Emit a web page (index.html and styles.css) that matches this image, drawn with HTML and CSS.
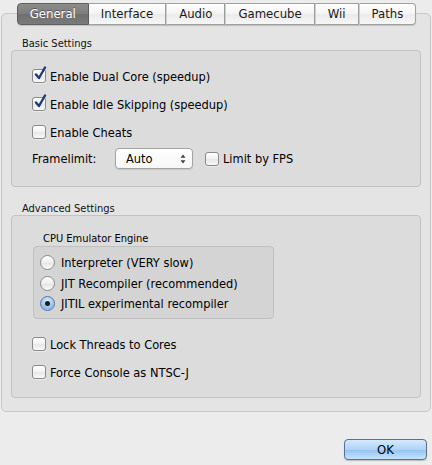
FILE: index.html
```html
<!DOCTYPE html>
<html>
<head>
<meta charset="utf-8">
<link rel="stylesheet" href="styles.css">
</head>
<body>
<div class="window">
  <div class="tabs">
    <div class="tab selected">General</div>
    <div class="tab">Interface</div>
    <div class="tab">Audio</div>
    <div class="tab">Gamecube</div>
    <div class="tab">Wii</div>
    <div class="tab">Paths</div>
  </div>
  <div class="pane">
    <div class="group-title">Basic Settings</div>
    <div class="group basic">
      <label class="row check-row"><span class="cb checked"><svg viewBox="0 0 14 16" class="tick"><path d="M3 8.5 L6 12 L12 1.5" /></svg></span>Enable Dual Core (speedup)</label>
      <label class="row check-row"><span class="cb checked"><svg viewBox="0 0 14 16" class="tick"><path d="M3 8.5 L6 12 L12 1.5" /></svg></span>Enable Idle Skipping (speedup)</label>
      <label class="row check-row"><span class="cb"></span>Enable Cheats</label>
      <div class="row frame-row">
        <span class="frame-label">Framelimit:</span>
        <span class="combo"><span class="combo-text">Auto</span><svg class="arrows" viewBox="0 0 6 10"><path d="M3 0.5 L5.5 3.8 L0.5 3.8 Z M3 9.5 L5.5 6.2 L0.5 6.2 Z" /></svg></span>
        <label class="fps"><span class="cb"></span>Limit by FPS</label>
      </div>
    </div>
    <div class="group-title adv-title">Advanced Settings</div>
    <div class="group advanced">
      <div class="sub-title">CPU Emulator Engine</div>
      <div class="radio-box">
        <label class="radio-row"><span class="rb"></span>Interpreter (VERY slow)</label>
        <label class="radio-row"><span class="rb"></span>JIT Recompiler (recommended)</label>
        <label class="radio-row"><span class="rb on"><span class="dot"></span></span>JITIL experimental recompiler</label>
      </div>
      <label class="row check-row lock"><span class="cb"></span>Lock Threads to Cores</label>
      <label class="row check-row"><span class="cb"></span>Force Console as NTSC-J</label>
    </div>
  </div>
  <div class="footer">
    <div class="ok">OK</div>
  </div>
</div>
</body>
</html>
```

FILE: styles.css
```css
html, body {
  margin: 0;
  padding: 0;
  background: #ececec;
}
body {
  font-family: "DejaVu Sans Condensed", "DejaVu Sans", "Liberation Sans", sans-serif;
  font-stretch: condensed;
  font-size: 12.7px;
  color: #000;
  width: 432px;
  height: 465px;
  overflow: hidden;
}
.window {
  padding: 3px 1px 0 1px;
}
.tabs {
  display: flex;
  justify-content: center;
  height: 22px;
  position: relative;
  z-index: 1;
  margin-left: 1px;
}
.tab {
  height: 20px;
  line-height: 20px;
  border: 1px solid #a0a0a0;
  border-left: none;
  background: linear-gradient(#ffffff, #f3f3f3 50%, #ebebeb 51%, #f6f6f6);
  padding: 0 12px;
  font-size: 13px;
  color: #1a1a1a;
  box-shadow: 0 1px 1px rgba(0,0,0,0.15);
}
.tab + .tab {
  border-left: 1px solid #cfcfcf;
}
.tab.selected + .tab {
  border-left: none;
}
.tab:first-child {
  border-left: 1px solid #7a7a7a;
  border-radius: 4px 0 0 4px;
}
.tab:last-child {
  border-radius: 0 4px 4px 0;
}
.tab.selected {
  background: linear-gradient(#8d8d8d, #7c7c7c 50%, #6f6f6f 51%, #7a7a7a);
  border-color: #5e5e5e;
  color: #fff;
  text-shadow: 0 -1px 0 rgba(0,0,0,0.35);
}
.pane {
  margin-top: -12px;
  border: 1px solid #c8c8c8;
  border-radius: 5px;
  background: #e4e4e4;
  height: 399px;
  box-sizing: border-box;
  padding: 23px 9px 0 9px;
}
.group-title {
  font-size: 11px;
  line-height: 13px;
  height: 13px;
  padding-left: 11px;
  color: #111;
}
.adv-title {
  margin-top: 15px;
}
.group {
  border: 1px solid #c3c3c3;
  border-radius: 4px;
  background: #dcdcdc;
  box-sizing: border-box;
}
.basic {
  height: 137px;
  padding-top: 18px;
}
.advanced {
  height: 183px;
  padding-top: 16px;
}
.row {
  display: flex;
  align-items: center;
  padding-left: 20px;
}
.check-row {
  height: 14px;
  margin-bottom: 14px;
}
.cb {
  width: 12px;
  height: 12px;
  border: 1px solid #8a8a8a;
  border-radius: 3px;
  background: linear-gradient(#ffffff, #f1f1f1 50%, #e6e6e6 51%, #f9f9f9);
  margin-right: 4px;
  position: relative;
  flex: none;
  box-shadow: 0 1px 0 rgba(255,255,255,0.4);
}
.tick {
  position: absolute;
  left: 0;
  top: -4px;
  width: 14px;
  height: 16px;
  fill: none;
  stroke: #1e3c74;
  stroke-width: 2.4;
  stroke-linecap: round;
  stroke-linejoin: round;
}
.frame-row {
  height: 21px;
  margin-top: -5px;
}
.frame-label {
  width: 83px;
}
.combo {
  width: 78px;
  height: 21px;
  border: 1px solid #a3a3a3;
  border-radius: 4px;
  background: linear-gradient(#ffffff, #f7f7f7);
  display: flex;
  align-items: center;
  justify-content: space-between;
  padding: 0 6px 0 10px;
  box-sizing: border-box;
  box-shadow: 0 1px 1px rgba(0,0,0,0.1);
}
.arrows {
  width: 6px;
  height: 10px;
  fill: #444;
}
.fps {
  display: flex;
  align-items: center;
  margin-left: 12px;
}
.sub-title {
  font-size: 11px;
  line-height: 13px;
  padding-left: 31px;
  margin-bottom: 1px;
}
.radio-box {
  margin-left: 21px;
  width: 241px;
  height: 73px;
  border: 1px solid #c0c0c0;
  border-radius: 4px;
  background: #d4d4d4;
  box-sizing: border-box;
  padding-top: 8px;
  padding-left: 6px;
}
.radio-row {
  display: flex;
  align-items: center;
  height: 15px;
  margin-bottom: 5.5px;
}
.rb {
  width: 13px;
  height: 13px;
  border: 1px solid #8a8a8a;
  border-radius: 50%;
  background: linear-gradient(#ffffff, #eeeeee 50%, #e3e3e3 51%, #fbfbfb);
  margin-right: 6px;
  flex: none;
  display: flex;
  align-items: center;
  justify-content: center;
}
.rb.on {
  background: radial-gradient(circle at 50% 30%, #d6ebfd, #8dbbea 70%, #a9d0f7);
  border-color: #5b77a0;
}
.dot {
  width: 5px;
  height: 5px;
  border-radius: 50%;
  background: #1b1b1b;
}
.lock {
  margin-top: 18px;
}
.footer {
  display: flex;
  justify-content: flex-end;
  padding: 27px 4px 0 0;
}
.ok {
  width: 81px;
  height: 19px;
  border: 1px solid #5d6f8e;
  border-radius: 4px;
  background: linear-gradient(#d5e9fd, #aed3f8 50%, #93c2f3 51%, #c6e3fd);
  text-align: center;
  line-height: 19px;
  font-size: 13px;
  box-shadow: 0 1px 1px rgba(0,0,0,0.2);
}
```
